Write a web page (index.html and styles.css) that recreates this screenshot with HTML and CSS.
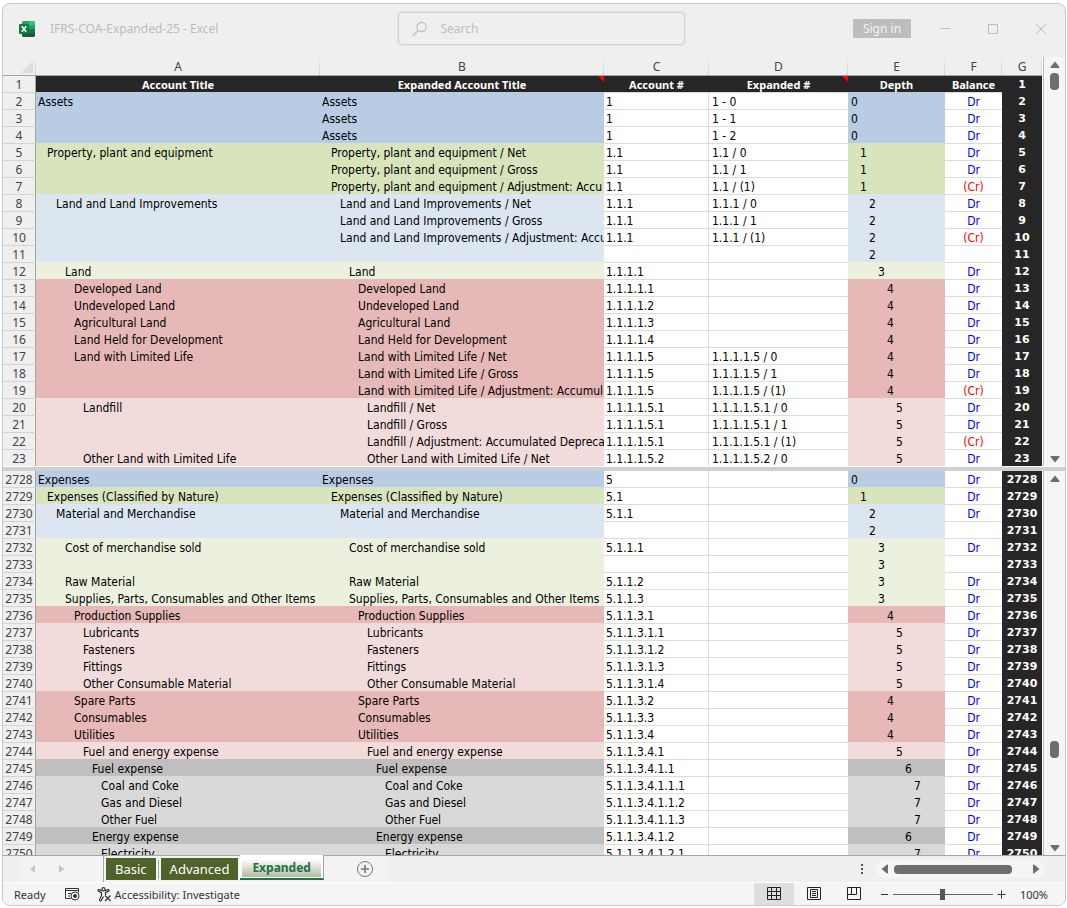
FILE: index.html
```html
<!DOCTYPE html>
<html lang="en">
<head>
  <meta charset="UTF-8">
  <meta name="viewport" content="width=device-width, initial-scale=1.0">
  <title>IFRS-COA-Expanded-25 - Excel</title>
  <link rel="stylesheet" href="styles.css">
</head>
<body>
  <div class="window">
    <header class="title-bar">
      <div class="title-left">
        <svg class="logo" width="16" height="16" viewBox="0 0 16 16">
          <path d="M4 0h6v4H3V1z" fill="#21a366"/>
          <path d="M10 0h5l1 1v3h-6z" fill="#33c481"/>
          <path d="M3 4h7v4H3z" fill="#107c41"/>
          <path d="M10 4h6v4h-6z" fill="#21a366"/>
          <path d="M3 8h7v4H3z" fill="#185c37"/>
          <path d="M10 8h6v4h-6z" fill="#107c41"/>
          <path d="M3 12h13v3l-1 1H4l-1-1z" fill="#185c37"/>
          <rect x="0" y="3" width="10" height="10" rx="1" fill="#107c41"/>
          <path d="M2.8 5.2l4.4 5.6M7.2 5.2l-4.4 5.6" stroke="#fff" stroke-width="1.6"/>
        </svg>
        <span>IFRS-COA-Expanded-25 - Excel</span>
      </div>
      <label class="search">
        <svg width="16" height="16" viewBox="0 0 16 16" fill="none" stroke="#bcbcbc" stroke-width="1.2">
          <circle cx="9.5" cy="6" r="4.6"/>
          <path d="M6.2 9.4L.8 15"/>
        </svg>
        <input type="text" placeholder="Search" aria-label="Search">
      </label>
      <div class="title-right">
        <button class="sign-in">Sign in</button>
        <button class="win-btn" aria-label="Minimize">
          <svg width="12" height="12" viewBox="0 0 12 12" stroke="#bcbcbc"><path d="M1 5.5h10"/></svg>
        </button>
        <button class="win-btn" aria-label="Maximize">
          <svg width="12" height="12" viewBox="0 0 12 12" stroke="#bcbcbc" fill="none"><path d="M1.5 1.5h9v9h-9z"/></svg>
        </button>
        <button class="win-btn" aria-label="Close">
          <svg width="12" height="12" viewBox="0 0 12 12" stroke="#bcbcbc" fill="none"><path d="M1 1l10 10M11 1L1 11"/></svg>
        </button>
      </div>
    </header>

    <section class="pane pane-top">
      <div class="grid">
        <table class="sheet">
          <colgroup>
            <col class="col-row"><col class="col-a"><col class="col-b"><col class="col-c">
            <col class="col-d"><col class="col-e"><col class="col-f"><col class="col-g">
          </colgroup>
          <thead>
            <tr class="letters">
              <th aria-label="Select all"><svg width="12" height="12" viewBox="0 0 12 12"><path d="M12 0v12H0z" fill="#dcdcdc"/></svg></th>
              <th>A</th><th>B</th><th>C</th><th>D</th><th>E</th><th>F</th><th>G</th>
            </tr>
            <tr class="heads">
              <th class="row-no">1</th>
              <th>Account Title</th>
              <th class="note">Expanded Account Title</th>
              <th>Account #</th>
              <th class="note">Expanded #</th>
              <th>Depth</th>
              <th>Balance</th>
              <th class="line-no">1</th>
            </tr>
          </thead>
          <tbody id="rowsTop"></tbody>
        </table>
      </div>
      <div class="vscroll">
        <button aria-label="Scroll up"><svg width="10" height="8" viewBox="0 0 10 8"><path d="M5 .5L9.5 6q.3 1-.7 1H1.2q-1 0-.7-1z" fill="#6e6e6e"/></svg></button>
        <span class="thumb thumb-start"></span>
        <button class="end" aria-label="Scroll down"><svg width="10" height="8" viewBox="0 0 10 8"><path d="M5 7.5L.5 2q-.3-1 .7-1h7.6q1 0 .7 1z" fill="#6e6e6e"/></svg></button>
      </div>
    </section>

    <div class="splitter"></div>

    <section class="pane pane-bottom">
      <div class="grid">
        <table class="sheet">
          <colgroup>
            <col class="col-row"><col class="col-a"><col class="col-b"><col class="col-c">
            <col class="col-d"><col class="col-e"><col class="col-f"><col class="col-g">
          </colgroup>
          <tbody id="rowsBottom"></tbody>
        </table>
      </div>
      <div class="vscroll">
        <button aria-label="Scroll up"><svg width="10" height="8" viewBox="0 0 10 8"><path d="M5 .5L9.5 6q.3 1-.7 1H1.2q-1 0-.7-1z" fill="#6e6e6e"/></svg></button>
        <span class="thumb thumb-late"></span>
        <button class="end" aria-label="Scroll down"><svg width="10" height="8" viewBox="0 0 10 8"><path d="M5 7.5L.5 2q-.3-1 .7-1h7.6q1 0 .7 1z" fill="#6e6e6e"/></svg></button>
      </div>
    </section>

    <nav class="tab-bar">
      <div class="tab-nav">
        <button aria-label="Previous sheet"><svg width="6" height="8" viewBox="0 0 6 8"><path d="M5 0v8L0 4z" fill="#c4c4c4"/></svg></button>
        <button aria-label="Next sheet"><svg width="6" height="8" viewBox="0 0 6 8"><path d="M1 0v8l5-4z" fill="#c4c4c4"/></svg></button>
      </div>
      <div class="tabs">
        <button class="tab">Basic</button>
        <span class="tab-line"></span>
        <button class="tab">Advanced</button>
        <button class="tab active"><span>Expanded</span></button>
      </div>
      <button class="add-sheet" aria-label="New sheet">
        <svg width="18" height="18" viewBox="0 0 18 18" fill="none" stroke="#777">
          <circle cx="9" cy="9" r="7.5"/>
          <path d="M9 5v8M5 9h8" stroke-width="1.6"/>
        </svg>
      </button>
      <div class="hscroll-area">
        <svg width="4" height="12" viewBox="0 0 4 12" fill="#555"><path d="M1 1h2v2H1zM1 5h2v2H1zM1 9h2v2H1z"/></svg>
        <div class="hscroll">
          <button aria-label="Scroll left"><svg width="8" height="10" viewBox="0 0 8 10"><path d="M.5 5L6 .5q1-.3 1 .7v7.6q0 1-1 .7z" fill="#6e6e6e"/></svg></button>
          <span class="hthumb"></span>
          <button aria-label="Scroll right"><svg width="8" height="10" viewBox="0 0 8 10"><path d="M7.5 5L2 .5q-1-.3-1 .7v7.6q0 1 1 .7z" fill="#6e6e6e"/></svg></button>
        </div>
      </div>
    </nav>

    <footer class="status-bar">
      <span class="ready">Ready</span>
      <button class="macro" aria-label="Record macro">
        <svg width="15" height="14" viewBox="0 0 15 14" fill="none" stroke="#333">
          <path d="M6 11.5H.5v-10h13v4M.5 3.5h13M3 6.5h3M3 9h2"/>
          <circle cx="10" cy="9" r="4"/>
          <circle cx="10" cy="9" r="1.5" fill="#333"/>
        </svg>
      </button>
      <button class="access">
        <svg width="16" height="15" viewBox="0 0 16 15" fill="none" stroke="#333" stroke-width="1.2">
          <circle cx="6.5" cy="2.3" r="1.6"/>
          <path d="M5 3.8L2.2 2.6Q1 2.3.9 3.4q0 .6.8 1L4.5 5.7v2.8L2.6 12.6q-.2 1.2.8 1.4.7 0 1-.7L6.500 9.500M8 3.8l2.8-1.2q1.200-.3 1.300.8 0 .6-.8 1L8.500 5.700V8"/>
          <path d="M8 8.500l5.500 5.500M13.500 8.500L8 14"/>
        </svg>
        Accessibility: Investigate
      </button>
      <div class="views">
        <button class="view on" aria-label="Normal">
          <svg width="14" height="14" viewBox="0 0 14 14" fill="none" stroke="#222"><path d="M.5.500h13v12H.5zM.5 4.500h13M.5 8.500h13M4.500.5v12M9.500.5v12"/></svg>
        </button>
        <button class="view" aria-label="Page layout">
          <svg width="14" height="14" viewBox="0 0 14 14" fill="none" stroke="#222"><path d="M.5.500h13v12H.5zM3.500 2.500h7v8h-7zM5 4.500h4M5 6.500h4M5 8.500h4"/></svg>
        </button>
        <button class="view" aria-label="Page break preview">
          <svg width="14" height="14" viewBox="0 0 14 14" fill="none" stroke="#222"><path d="M.5.500h13v12H.5zM4.500.5v7M9.500.5v7M.5 7.500h9"/></svg>
        </button>
      </div>
      <div class="zoom">
        <button aria-label="Zoom out"><svg width="9" height="9" viewBox="0 0 9 9" stroke="#333"><path d="M1 4.500h7"/></svg></button>
        <input type="range" min="0" max="100" value="50" aria-label="Zoom">
        <button aria-label="Zoom in"><svg width="9" height="9" viewBox="0 0 9 9" stroke="#333"><path d="M.5 4.500h8M4.500.5v8"/></svg></button>
        <span class="percent">100%</span>
      </div>
    </footer>
  </div>

  <script src="script.js"></script>
</body>
</html>
```
FILE: styles.css
```css
* {
  box-sizing: border-box;
}

body {
  margin: 0;
  padding: 3px 1px 2px 2px;
  height: 100vh;
  background-color: #fff;
  font-family: "Noto Sans", "Open Sans", sans-serif;
  font-size: 12px;
}

button {
  border: none;
  padding: 0;
  background: none;
  font: inherit;
  color: inherit;
}

svg {
  display: block;
  flex: none;
}

.window {
  display: flex;
  flex-direction: column;
  height: 100%;
  border: 1px solid #c8c8c8;
  border-radius: 8px;
  background-color: #efefef;
  overflow: hidden;
}

/* title bar */
.title-bar {
  display: grid;
  grid-template-columns: 1fr 287px 1fr;
  align-items: center;
  flex: none;
  height: 53px;
  padding-bottom: 4px;
  color: #bcbcbc;
}

.title-left {
  display: flex;
  align-items: center;
  gap: 15px;
  padding-left: 16px;
}

.search {
  display: flex;
  align-items: center;
  gap: 11px;
  height: 33px;
  padding: 0 13px;
  margin-left: 7px;
  margin-right: -7px;
  border: 1px solid #d0d0d0;
  border-radius: 4px;
  box-shadow: 0 0 1px 1px #e4e4e4;
}

.search input {
  flex: 1;
  min-width: 0;
  border: none;
  outline: none;
  background: none;
  font: inherit;
  font-size: 12px;
}

.search input::placeholder {
  color: #bcbcbc;
}

.title-right {
  display: flex;
  justify-content: flex-end;
  align-items: center;
  gap: 36px;
  padding-right: 18px;
}

.sign-in {
  width: 58px;
  height: 19px;
  background-color: #bdbdbd;
  color: #f4f4f4;
  margin-right: -8px;
}

/* panes */
.pane {
  display: flex;
  overflow: hidden;
}

.pane-top {
  flex: none;
}

.pane-bottom {
  flex: 1;
  min-height: 0;
}

.grid {
  flex: 1;
  min-width: 0;
  border-right: 1px solid #bdbdbd;
}

.sheet {
  width: 100%;
  table-layout: fixed;
  border-collapse: separate;
  border-spacing: 0;
  background-color: #fff;
  padding-right: 1px;
}

.col-row { width: 33px; }
.col-c { width: 105px; }
.col-d { width: 139px; }
.col-e { width: 97px; }
.col-f { width: 57px; }
.col-g { width: 40px; }

.sheet th,
.sheet td {
  height: 17px;
  padding: 2px 0 0;
  border-top: 1px solid #dcdcdc;
  line-height: 14px;
  white-space: nowrap;
  overflow: hidden;
  text-align: left;
}

.sheet td {
  font-family: "DejaVu Sans Condensed", "DejaVu Sans", sans-serif;
  font-size: 12px;
}

.sheet .letters th {
  height: 19px;
  border-top: none;
  border-bottom: 1px solid #9fa79f;
  background: linear-gradient(#efefef, #cfcfcf) right / 1px 100% no-repeat #efefef;
  font-weight: normal;
  color: #444;
  text-align: center;
}

.letters svg {
  margin: 0 3px 0 auto;
}

.sheet .heads th {
  position: relative;
  height: 16px;
  border-top: none;
  background-color: #262626;
  color: #fff;
  font-size: 11px;
  font-weight: bold;
  text-align: center;
}

.note::after {
  content: "";
  position: absolute;
  top: 0;
  right: 0;
  border-top: 6px solid #f00;
  border-left: 6px solid transparent;
}

.sheet .row-no,
.sheet .heads .row-no {
  border-top-color: #d4d4d4;
  border-right: 1px solid #9fa79f;
  background-color: #efefef;
  color: #444;
  font-size: 12px;
  font-weight: normal;
  text-align: center;
}

.sheet .line-no,
.sheet .heads .line-no {
  border-top-color: #262626;
  background-color: #262626;
  color: #fff;
  font-family: "DejaVu Sans", sans-serif;
  font-size: 11px;
  font-weight: bold;
  text-align: center;
}

.pane-bottom tr:first-child > * {
  height: 16px;
  border-top: none;
}

/* indent grows by 9px for each depth */
.sheet .title { padding-left: 2px; }
.sheet .depth { padding-left: 3px; }
.level-1 .indent { margin-left: 9px; }
.level-2 .indent { margin-left: 18px; }
.level-3 .indent { margin-left: 27px; }
.level-4 .indent { margin-left: 36px; }
.level-5 .indent { margin-left: 45px; }
.level-6 .indent { margin-left: 54px; }
.level-7 .indent { margin-left: 63px; }

.level-0 .fill { background-color: #b8cce4; border-top-color: #b8cce4; }
.level-1 .fill { background-color: #d8e4bc; border-top-color: #d8e4bc; }
.level-2 .fill { background-color: #dce6f1; border-top-color: #dce6f1; }
.level-3 .fill { background-color: #ebf1de; border-top-color: #ebf1de; }
.level-4 .fill { background-color: #e6b8b7; border-top-color: #e6b8b7; }
.level-5 .fill { background-color: #f2dcdb; border-top-color: #f2dcdb; }
.level-6 .fill { background-color: #bfbfbf; border-top-color: #bfbfbf; }
.level-7 .fill { background-color: #d9d9d9; border-top-color: #d9d9d9; }

.sheet .acct {
  padding-left: 2px;
  border-right: 1px solid #dcdcdc;
}

.sheet .exp {
  padding-left: 3px;
}

.sheet .bal {
  text-align: center;
  color: #00f;
}

.sheet .bal.credit {
  color: #f00;
}

.splitter {
  flex: none;
  height: 5px;
  border-top: 1px solid #fff;
  background-color: #d0d0d0;
}

/* scrollbars */
.vscroll {
  display: flex;
  flex-direction: column;
  align-items: center;
  flex: none;
  width: 21px;
  padding: 4px 0 3px;
  background-color: #f5f5f5;
}

.thumb {
  width: 9px;
  height: 17px;
  border-radius: 4px;
  background-color: #6e6e6e;
}

.thumb-start {
  margin-top: 4px;
}

.thumb-late {
  margin-top: auto;
  margin-bottom: 86px;
}

.vscroll .end {
  margin-top: auto;
}

.thumb-late + .end {
  margin-top: 0;
}

/* sheet tabs */
.tab-bar {
  display: flex;
  flex: none;
  height: 28px;
  border-top: 1px solid #a6a6a6;
  border-bottom: 1px solid #fff;
}

.tab-nav {
  display: flex;
  align-items: center;
  gap: 22px;
  width: 85px;
  margin-left: 16px;
  padding-left: 11px;
  background-color: #f3f3f3;
  border-right: 1px solid #a6a6a6;
}

.tabs {
  display: flex;
  gap: 2px;
  padding-left: 2px;
  background-color: #f3f3f3;
}

.tab {
  height: 22px;
  margin-top: 2px;
  padding: 0 9px;
  background-color: #4f6228;
  color: #fff;
  font-size: 13px;
}

.tab-line {
  width: 1px;
  height: 19px;
  margin-top: 4px;
  background-color: #a6a6a6;
}

.tab.active {
  height: 25px;
  margin-top: -1px;
  padding: 4px 2px 1px;
  border-bottom: 2px solid #217346;
  border-right: 1px solid #a6a6a6;
  background-color: #fff;
  color: #217346;
  font-size: 12px;
  font-weight: bold;
}

.tab.active span {
  display: block;
  padding: 0 10px;
  line-height: 18px;
  background: linear-gradient(#fff, #b3bba3);
}

.add-sheet {
  padding: 0 15px 0 32px;
  background-color: #f3f3f3;
}

.hscroll-area {
  display: flex;
  align-items: center;
  gap: 12px;
  margin-left: auto;
  padding-right: 20px;
}

.hscroll {
  display: flex;
  align-items: center;
  gap: 5px;
  height: 18px;
  padding: 0 5px;
  border-radius: 9px;
  background-color: #f5f5f5;
}

.hthumb {
  width: 118px;
  height: 9px;
  margin-right: 15px;
  border-radius: 4px;
  background-color: #6e6e6e;
}

/* status bar */
.status-bar {
  display: flex;
  align-items: center;
  flex: none;
  height: 22px;
  background-color: #f5f5f5;
  color: #333;
  font-size: 11px;
}

.ready {
  padding-left: 11px;
}

.macro {
  margin-left: 19px;
}

.access {
  display: flex;
  align-items: center;
  gap: 2px;
  margin-left: 17px;
}

.views {
  display: flex;
  align-self: stretch;
  margin-left: auto;
}

.view {
  display: flex;
  align-items: center;
  justify-content: center;
  width: 40px;
}

.view.on {
  background-color: #dedede;
}

.zoom {
  display: flex;
  align-items: center;
  gap: 4px;
  margin-left: 6px;
  padding-right: 17px;
}

.zoom input {
  appearance: none;
  width: 100px;
  height: 12px;
  margin: 0;
  background: linear-gradient(#666, #666) center / 100% 1px no-repeat;
}

.zoom input::-webkit-slider-thumb {
  appearance: none;
  width: 5px;
  height: 11px;
  background-color: #555;
}

.percent {
  padding-left: 10px;
}
```
FILE: script.js
```js
// row number, depth, title, expanded title, account #, expanded #, balance
const topRows = [
  [2, 0, 'Assets', 'Assets', '1', '1 - 0', 'Dr'],
  [3, 0, '', 'Assets', '1', '1 - 1', 'Dr'],
  [4, 0, '', 'Assets', '1', '1 - 2', 'Dr'],
  [5, 1, 'Property, plant and equipment', 'Property, plant and equipment / Net', '1.1', '1.1 / 0', 'Dr'],
  [6, 1, '', 'Property, plant and equipment / Gross', '1.1', '1.1 / 1', 'Dr'],
  [7, 1, '', 'Property, plant and equipment / Adjustment: Accu', '1.1', '1.1 / (1)', '(Cr)'],
  [8, 2, 'Land and Land Improvements', 'Land and Land Improvements / Net', '1.1.1', '1.1.1 / 0', 'Dr'],
  [9, 2, '', 'Land and Land Improvements / Gross', '1.1.1', '1.1.1 / 1', 'Dr'],
  [10, 2, '', 'Land and Land Improvements / Adjustment: Accu', '1.1.1', '1.1.1 / (1)', '(Cr)'],
  [11, 2, '', '', '', '', ''],
  [12, 3, 'Land', 'Land', '1.1.1.1', '', 'Dr'],
  [13, 4, 'Developed Land', 'Developed Land', '1.1.1.1.1', '', 'Dr'],
  [14, 4, 'Undeveloped Land', 'Undeveloped Land', '1.1.1.1.2', '', 'Dr'],
  [15, 4, 'Agricultural Land', 'Agricultural Land', '1.1.1.1.3', '', 'Dr'],
  [16, 4, 'Land Held for Development', 'Land Held for Development', '1.1.1.1.4', '', 'Dr'],
  [17, 4, 'Land with Limited Life', 'Land with Limited Life / Net', '1.1.1.1.5', '1.1.1.1.5 / 0', 'Dr'],
  [18, 4, '', 'Land with Limited Life / Gross', '1.1.1.1.5', '1.1.1.1.5 / 1', 'Dr'],
  [19, 4, '', 'Land with Limited Life / Adjustment: Accumul', '1.1.1.1.5', '1.1.1.1.5 / (1)', '(Cr)'],
  [20, 5, 'Landfill', 'Landfill / Net', '1.1.1.1.5.1', '1.1.1.1.5.1 / 0', 'Dr'],
  [21, 5, '', 'Landfill / Gross', '1.1.1.1.5.1', '1.1.1.1.5.1 / 1', 'Dr'],
  [22, 5, '', 'Landfill / Adjustment: Accumulated Depreca', '1.1.1.1.5.1', '1.1.1.1.5.1 / (1)', '(Cr)'],
  [23, 5, 'Other Land with Limited Life', 'Other Land with Limited Life / Net', '1.1.1.1.5.2', '1.1.1.1.5.2 / 0', 'Dr']
];

// title is the same in both columns here
const bottomRows = [
  [2728, 0, 'Expenses', '5', 'Dr'],
  [2729, 1, 'Expenses (Classified by Nature)', '5.1', 'Dr'],
  [2730, 2, 'Material and Merchandise', '5.1.1', 'Dr'],
  [2731, 2, '', '', ''],
  [2732, 3, 'Cost of merchandise sold', '5.1.1.1', 'Dr'],
  [2733, 3, '', '', ''],
  [2734, 3, 'Raw Material', '5.1.1.2', 'Dr'],
  [2735, 3, 'Supplies, Parts, Consumables and Other Items', '5.1.1.3', 'Dr'],
  [2736, 4, 'Production Supplies', '5.1.1.3.1', 'Dr'],
  [2737, 5, 'Lubricants', '5.1.1.3.1.1', 'Dr'],
  [2738, 5, 'Fasteners', '5.1.1.3.1.2', 'Dr'],
  [2739, 5, 'Fittings', '5.1.1.3.1.3', 'Dr'],
  [2740, 5, 'Other Consumable Material', '5.1.1.3.1.4', 'Dr'],
  [2741, 4, 'Spare Parts', '5.1.1.3.2', 'Dr'],
  [2742, 4, 'Consumables', '5.1.1.3.3', 'Dr'],
  [2743, 4, 'Utilities', '5.1.1.3.4', 'Dr'],
  [2744, 5, 'Fuel and energy expense', '5.1.1.3.4.1', 'Dr'],
  [2745, 6, 'Fuel expense', '5.1.1.3.4.1.1', 'Dr'],
  [2746, 7, 'Coal and Coke', '5.1.1.3.4.1.1.1', 'Dr'],
  [2747, 7, 'Gas and Diesel', '5.1.1.3.4.1.1.2', 'Dr'],
  [2748, 7, 'Other Fuel', '5.1.1.3.4.1.1.3', 'Dr'],
  [2749, 6, 'Energy expense', '5.1.1.3.4.1.2', 'Dr'],
  [2750, 7, 'Electricity', '5.1.1.3.4.1.2.1', 'Dr']
].map(([no, depth, title, acct, bal]) => [no, depth, title, title, acct, '', bal]);

function renderRows(id, rows) {
  document.getElementById(id).innerHTML = rows.map(([no, depth, title, expanded, acct, exp, bal]) => `
    <tr class="level-${depth}">
      <th class="row-no" scope="row">${no}</th>
      <td class="fill title"><div class="indent">${title}</div></td>
      <td class="fill title"><div class="indent">${expanded}</div></td>
      <td class="acct">${acct}</td>
      <td class="exp">${exp}</td>
      <td class="fill depth"><div class="indent">${depth}</div></td>
      <td class="bal${bal === '(Cr)' ? ' credit' : ''}">${bal}</td>
      <td class="line-no">${no}</td>
    </tr>`).join('');
}

renderRows('rowsTop', topRows);
renderRows('rowsBottom', bottomRows);
```
